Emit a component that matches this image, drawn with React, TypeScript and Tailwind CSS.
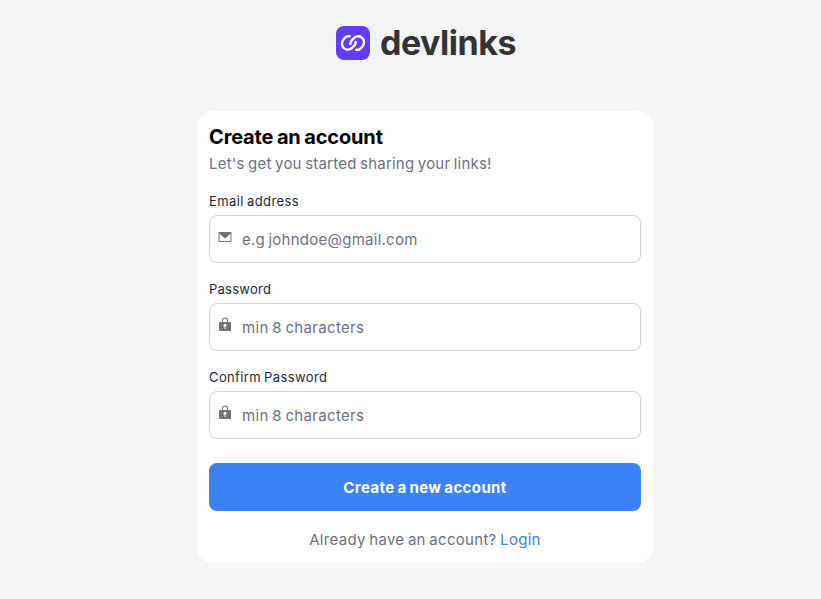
import React from "react";

function LogoMark() {
  return (
    <svg className="mr-[10px] size-[34px] shrink-0" viewBox="0 0 34 34" fill="none">
      <rect width="34" height="34" rx="8" fill="#633CFF" />
      <g stroke="#fff" strokeWidth="2.4" strokeLinecap="round" strokeLinejoin="round">
        <path d="M13.600 10.200C11.900 9.900 10.200 10.600 9 11.900L7.700 13.200C5.400 15.700 5.400 19.700 7.700 22C10 24.300 13.800 24.200 16.100 21.900L17.900 20.100C19.100 18.900 19.700 17.500 19.700 16" />
        <path d="M20.400 23.800C22.100 24.100 23.800 23.400 25 22.100L26.300 20.800C28.600 18.300 28.600 14.300 26.300 12C24 9.700 20.200 9.800 17.900 12.100L16.100 13.900C14.900 15.100 14.300 16.500 14.300 18" />
      </g>
    </svg>
  );
}

function MailIcon() {
  return (
    <svg className="-mt-1 size-4 shrink-0" viewBox="0 0 16 16" fill="#737373">
      <path d="M14 3H2a.5.5 0 0 0-.5.5V12a1 1 0 0 0 1 1h11a1 1 0 0 0 1-1V3.500A.5.5 0 0 0 14 3Zm-.5 9h-11V4.637l5.162 4.732a.5.5 0 0 0 .676 0L13.500 4.637V12Z" />
    </svg>
  );
}

function LockIcon() {
  return (
    <svg className="-mt-1 size-4 shrink-0" viewBox="0 0 16 16" fill="#737373">
      <path d="M13 5h-2V3.500a3 3 0 0 0-6 0V5H3a1 1 0 0 0-1 1v7a1 1 0 0 0 1 1h10a1 1 0 0 0 1-1V6a1 1 0 0 0-1-1ZM8.500 9.914V11.500a.5.5 0 0 1-1 0V9.914a1.500 1.500 0 1 1 1 0ZM10 5H6V3.500a2 2 0 1 1 4 0V5Z" />
    </svg>
  );
}

type FieldProps = {
  label: string;
  labelClass: string;
  type: string;
  placeholder: string;
  inputClass: string;
  icon: React.ReactNode;
};

function Field({ label, labelClass, type, placeholder, inputClass, icon }: FieldProps) {
  return (
    <label className="flex flex-col gap-1">
      <span className={`text-[13px] leading-5 text-gray-800 ${labelClass}`}>{label}</span>
      <span className="flex h-12 items-center rounded-lg border border-gray-300 pl-[7px]">
        {icon}
        <input
          type={type}
          placeholder={placeholder}
          className={`ml-[9px] min-w-0 flex-1 bg-transparent pt-0.5 text-[15px] leading-6 outline-none placeholder:text-gray-500 ${inputClass}`}
        />
      </span>
    </label>
  );
}

export default function App() {
  return (
    <main className="flex h-screen flex-col items-center overflow-hidden bg-[#f3f4f6] pl-[29px] font-['Inter',sans-serif] [word-spacing:-1px]">
      <header className="mt-[23px] ml-[2px] flex h-10 items-center">
        <LogoMark />
        <span className="text-[34px] leading-10 font-bold tracking-[-0.5px] text-[#333333]">devlinks</span>
      </header>
      <section className="mt-12 flex h-[452px] w-[456px] flex-col rounded-2xl bg-white p-3">
        <h1 className="text-xl leading-7 font-bold tracking-[-0.15px] text-black">Create an account</h1>
        <p className="pt-px text-[15px] leading-6 tracking-[0.22px] text-gray-500">Let's get you started sharing your links!</p>
        <form className="mt-[15px] flex flex-col gap-4">
          <Field label="Email address" labelClass="tracking-[0.42px]" type="email" placeholder="e.g johndoe@gmail.com" inputClass="tracking-[0.25px] [word-spacing:-1px]" icon={<MailIcon />} />
          <Field label="Password" labelClass="tracking-[0.25px]" type="password" placeholder="min 8 characters" inputClass="tracking-[0.34px] [word-spacing:-1px]" icon={<LockIcon />} />
          <Field label="Confirm Password" labelClass="tracking-[0.38px]" type="password" placeholder="min 8 characters" inputClass="tracking-[0.34px] [word-spacing:-1px]" icon={<LockIcon />} />
          <button type="button" className="mt-2 h-12 rounded-lg bg-[#3b82f6] pt-0.5 text-[15px] font-bold tracking-[0.38px] text-white [word-spacing:-1px]">
            Create a new account
          </button>
        </form>
        <p className="mt-[17px] text-center text-[15px] leading-6 tracking-[0.3px] text-gray-500">
          Already have an account? <a className="text-[#3b82f6]">Login</a>
        </p>
      </section>
    </main>
  );
}
